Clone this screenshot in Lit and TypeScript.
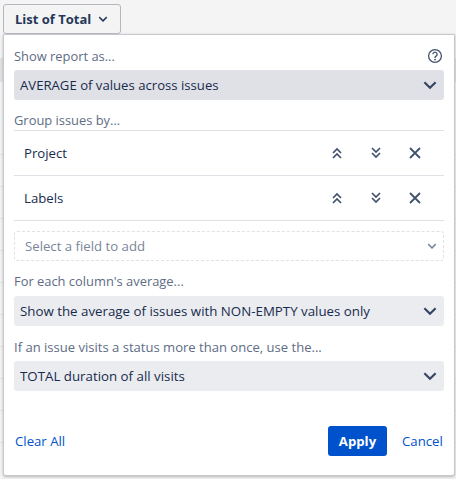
import { LitElement, html, css, svg } from "lit";
import { customElement } from "lit/decorators.js";

const chevron = (w: number) => html`<svg class="chev" width="${w}" height="${w}" viewBox="0 0 16 16"><path d="M3 5.5 8 10.5 13 5.5" fill="none" stroke="currentColor" stroke-width="1.9"/></svg>`;
const up = svg`<path d="M3 7 7 3 11 7M3 12 7 8 11 12" fill="none" stroke="currentColor" stroke-width="1.7"/>`;
const down = svg`<path d="M3 2 7 6 11 2M3 7 7 11 11 7" fill="none" stroke="currentColor" stroke-width="1.7"/>`;
const close = svg`<path d="M2 2 12 12M12 2 2 12" fill="none" stroke="currentColor" stroke-width="1.8"/>`;

@customElement("app-root")
export class AppRoot extends LitElement {
  static styles = css`
    :host { display: block; width: 456px; height: 479px; overflow: hidden; font-family: "Open Sans", "Noto Sans", sans-serif; font-size: 13.2px; color: #172b4d;
      background-color: #f4f4f4;
      background-image: linear-gradient(#e2e2e2, #e2e2e2), repeating-linear-gradient(to bottom, #e4e4e4 0 1px, transparent 1px 32px);
      background-size: 100% 24px, 100% 290px;
      background-position: 0 58px, 0 154px;
      background-repeat: no-repeat; }
    .top { height: 34px; padding: 4px 0 0 3px; box-sizing: border-box; }
    .trigger { display: inline-flex; align-items: center; gap: 6px; height: 30px; width: 118px; box-sizing: border-box; padding-left: 11px; border: 1px solid #b4b7bd; border-radius: 3px; background: #f4f4f4; font-weight: 700; font-size: 13px; color: #253858; }
    .panel { margin-left: 3px; width: 452px; height: 442px; box-sizing: border-box; background: #fff; border: 1px solid #c6c8cc; border-radius: 0 0 3px 3px; box-shadow: 0 1px 3px rgba(0,0,0,.25); padding: 0 10px; display: flex; flex-direction: column; }
    .label { color: #5e6c84; height: 20px; line-height: 20px; font-size: 12.9px; }
    .head { display: flex; justify-content: space-between; align-items: center; padding-top: 11px; margin-bottom: 4px; }
    .help { color: #42526e; margin-right: 1px; display: flex; }
    .sel { height: 30px; border-radius: 3px; background: #ebecf0; display: flex; align-items: center; justify-content: space-between; padding: 0 5px 0 6px; font-size: 13.3px; }
    .sel.dark { background: #dfe1e6; font-size: 13.15px; }
    .sel .chev { color: #344563; }
    .gap1 { margin-top: 10px; }
    .rows { border-top: 1px solid #dfe1e6; }
    .row { height: 44px; border-bottom: 1px solid #dfe1e6; display: flex; align-items: center; padding-left: 10px; }
    .row .name { flex: 1; }
    .acts { display: grid; grid-template-columns: 14px 14px 14px; column-gap: 25px; margin-right: 22px; color: #42526e; }
    .acts svg { display: block; }
    .add { margin-top: 10px; height: 30px; box-sizing: border-box; border: 1px dashed #dfe1e6; border-radius: 3px; display: flex; align-items: center; justify-content: space-between; padding: 0 5px 0 10px; color: #7a869a; }
    .add .chev { color: #7a869a; }
    .lab2 { margin-top: 10px; margin-bottom: 5px; }
    .lab3 { margin-top: 11px; margin-bottom: 4px; font-size: 13.05px; }
    .foot { margin-top: auto; margin-bottom: 19px; display: flex; align-items: center; }
    .link { color: #0052cc; }
    .clear { flex: 1; padding-left: 1px; }
    .apply { width: 59px; height: 30px; background: #0052cc; color: #fff; font-weight: 700; border-radius: 3px; display: flex; align-items: center; justify-content: center; margin-right: 15px; }
    .cancel { width: 42px; }
  `;

  render() {
    return html`
      <div class="top"><div class="trigger">List of Total ${chevron(12)}</div></div>
      <div class="panel">
        <div class="head label"><span>Show report as...</span>
          <span class="help"><svg width="16" height="16" viewBox="0 0 16 16"><circle cx="8" cy="8" r="6.4" fill="none" stroke="currentColor" stroke-width="1.3"/><path d="M5.9 6.3a2.1 2.1 0 1 1 3.2 1.8C8.4 8.6 8 9 8 9.9" fill="none" stroke="currentColor" stroke-width="1.3"/><circle cx="8" cy="11.6" r=".9" fill="currentColor"/></svg></span></div>
        <div class="sel dark"><span>AVERAGE of values across issues</span>${chevron(18)}</div>
        <div class="label gap1">Group issues by...</div>
        <div class="rows">
          ${["Project", "Labels"].map((n) => html`<div class="row"><span class="name">${n}</span><div class="acts">
            <svg width="14" height="14" viewBox="0 0 14 14">${up}</svg>
            <svg width="14" height="14" viewBox="0 0 14 14">${down}</svg>
            <svg width="14" height="14" viewBox="0 0 14 14">${close}</svg></div></div>`)}
        </div>
        <div class="add"><span>Select a field to add</span>${chevron(12)}</div>
        <div class="label lab2">For each column's average...</div>
        <div class="sel"><span>Show the average of issues with NON-EMPTY values only</span>${chevron(18)}</div>
        <div class="label lab3">If an issue visits a status more than once, use the...</div>
        <div class="sel"><span>TOTAL duration of all visits</span>${chevron(18)}</div>
        <div class="foot"><span class="link clear">Clear All</span><div class="apply">Apply</div><span class="link cancel">Cancel</span></div>
      </div>
    `;
  }
}
